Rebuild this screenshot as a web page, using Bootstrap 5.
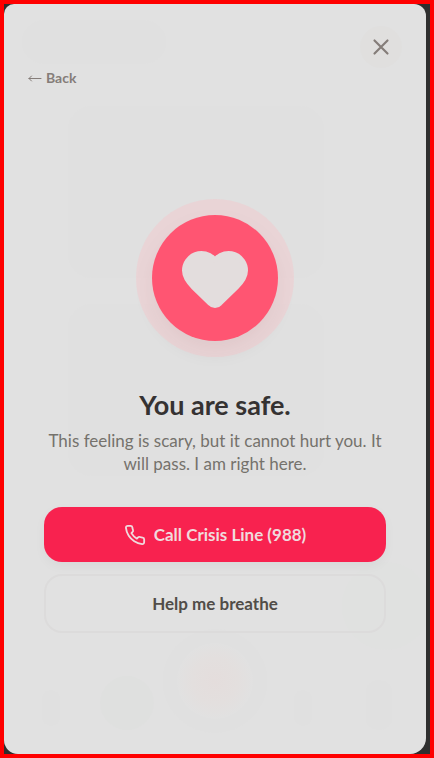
<!DOCTYPE html>
<html lang="en">
<head>
<meta charset="utf-8">
<meta name="viewport" content="width=device-width, initial-scale=1">
<title>You are safe</title>
<link href="https://cdn.jsdelivr.net/npm/bootstrap@5.3.0/dist/css/bootstrap.min.css" rel="stylesheet">
<style>
body { background: #2f2f2f; font-family: Lato, "Open Sans", sans-serif; }
.app-frame { border: 4px solid #ff0000; padding-right: 4px; }
.calm-panel { background: #e1e1e1; border-radius: 10px 12px 16px 14px; }
.backdrop-art { inset: 0; width: 100%; height: 100%; }
.panel-head { padding: 22px 24px 6px; }
.close-btn { width: 42px; height: 42px; background: #e0dfde; color: #857d79; }
.back-link { font-size: 14px; line-height: 20px; font-weight: 700; color: #857d79; }
.back-arrow { width: 14px; height: 8px; }
.panel-body { padding: 0 40px; }
.heart-disc { width: 126px; height: 126px; background: #ff5572; color: #e3dddd; margin-bottom: 48px;
  box-shadow: 0 0 0 16px rgba(255, 185, 193, .3), 0 10px 20px rgba(60, 40, 40, .08); }
.safe-title { font-size: 27px; line-height: 32px; font-weight: 700; color: #353232; }
.safe-text { font-size: 17px; line-height: 23px; color: #75726c; margin-bottom: 32px; }
.action-stack { gap: 12px; }
.action-btn { border-radius: 18px; font-size: 17px; line-height: 23px; font-weight: 700; padding: 16px; }
.btn-call { background: #f8224f; color: #f0dadd; border: 0; box-shadow: 0 4px 12px rgba(0, 0, 0, .04); }
.btn-breathe { border: 2px solid #dcdbdb; color: #514d48; }
.btn-call:hover { background: #e61c46; color: #f0dadd; }
</style>
</head>
<body>
<div class="app-frame min-vh-100 d-flex">
  <main class="calm-panel flex-grow-1 d-flex flex-column position-relative overflow-hidden">
    <svg class="backdrop-art position-absolute" viewBox="0 0 422 750" preserveAspectRatio="none" aria-hidden="true">
      <defs>
        <radialGradient id="rose"><stop offset="0" stop-color="#e4dddc"/><stop offset=".6" stop-color="#e3dfde"/><stop offset="1" stop-color="#e1e1e1"/></radialGradient>
      </defs>
      <g fill="#e0e0e0">
        <rect x="18" y="16" width="144" height="44" rx="22"/>
        <rect x="64" y="102" width="256" height="172" rx="24"/>
        <rect x="64" y="300" width="256" height="172" rx="24"/>
        <circle cx="211" cy="677" r="52"/>
        <rect x="38" y="686" width="18" height="36" rx="9"/>
        <rect x="290" y="686" width="18" height="36" rx="9"/>
        <rect x="362" y="676" width="26" height="50" rx="12"/>
      </g>
      <circle cx="123" cy="699" r="27" fill="#dfe0df"/>
      <circle cx="382" cy="602" r="44" fill="#e0e1e0"/>
      <circle cx="211" cy="677" r="38" fill="url(#rose)"/>
    </svg>

    <header class="panel-head position-relative d-flex flex-column">
      <button type="button" class="close-btn btn border-0 rounded-circle p-0 d-flex align-items-center justify-content-center align-self-end" aria-label="Close">
        <svg width="26" height="26" viewBox="0 0 24 24" fill="none" stroke="currentColor" stroke-width="2" stroke-linecap="round" aria-hidden="true"><path d="M18 6 6 18M6 6l12 12"/></svg>
      </button>
      <a href="#" class="back-link d-flex align-items-center gap-1 text-decoration-none align-self-start">
        <svg class="back-arrow" viewBox="0 0 14 8" fill="none" stroke="currentColor" stroke-linecap="round" stroke-linejoin="round" aria-hidden="true"><path d="M13 4.500H1M3.500 2 1 4.500l2.500 2.500"/></svg>
        Back
      </a>
    </header>

    <section class="panel-body position-relative flex-grow-1 d-flex flex-column align-items-center justify-content-center text-center">
      <div class="heart-disc rounded-circle d-flex align-items-center justify-content-center">
        <svg width="72" height="72" viewBox="0 0 24 24" fill="currentColor" stroke="currentColor" stroke-width="2" stroke-linecap="round" stroke-linejoin="round" aria-hidden="true"><path d="M2 9.500a5.500 5.500 0 0 1 9.591-3.676.56.56 0 0 0 .818 0A5.490 5.490 0 0 1 22 9.500c0 2.290-1.500 4-3 5.500l-5.492 5.313a2 2 0 0 1-3 .019L5 15c-1.500-1.500-3-3.200-3-5.500"/></svg>
      </div>
      <h1 class="safe-title mb-2">You are safe.</h1>
      <p class="safe-text">This feeling is scary, but it cannot hurt you. It will pass. I am right here.</p>
      <div class="action-stack d-grid w-100">
        <button type="button" class="btn action-btn btn-call d-flex align-items-center justify-content-center gap-2">
          <svg width="22" height="22" viewBox="0 0 24 24" fill="none" stroke="currentColor" stroke-width="2" stroke-linecap="round" stroke-linejoin="round" aria-hidden="true"><path d="M22 16.92v3a2 2 0 0 1-2.18 2 19.79 19.79 0 0 1-8.63-3.07 19.5 19.5 0 0 1-6-6 19.79 19.79 0 0 1-3.07-8.67A2 2 0 0 1 4.11 2h3a2 2 0 0 1 2 1.72c.127.96.361 1.903.7 2.81a2 2 0 0 1-.45 2.11L8.09 9.91a16 16 0 0 0 6 6l1.27-1.27a2 2 0 0 1 2.11-.45c.907.339 1.85.573 2.81.7A2 2 0 0 1 22 16.92z"/></svg>
          Call Crisis Line (988)
        </button>
        <button type="button" class="btn action-btn btn-breathe">Help me breathe</button>
      </div>
    </section>
  </main>
</div>
<script src="https://cdn.jsdelivr.net/npm/bootstrap@5.3.0/dist/js/bootstrap.bundle.min.js"></script>
</body>
</html>
